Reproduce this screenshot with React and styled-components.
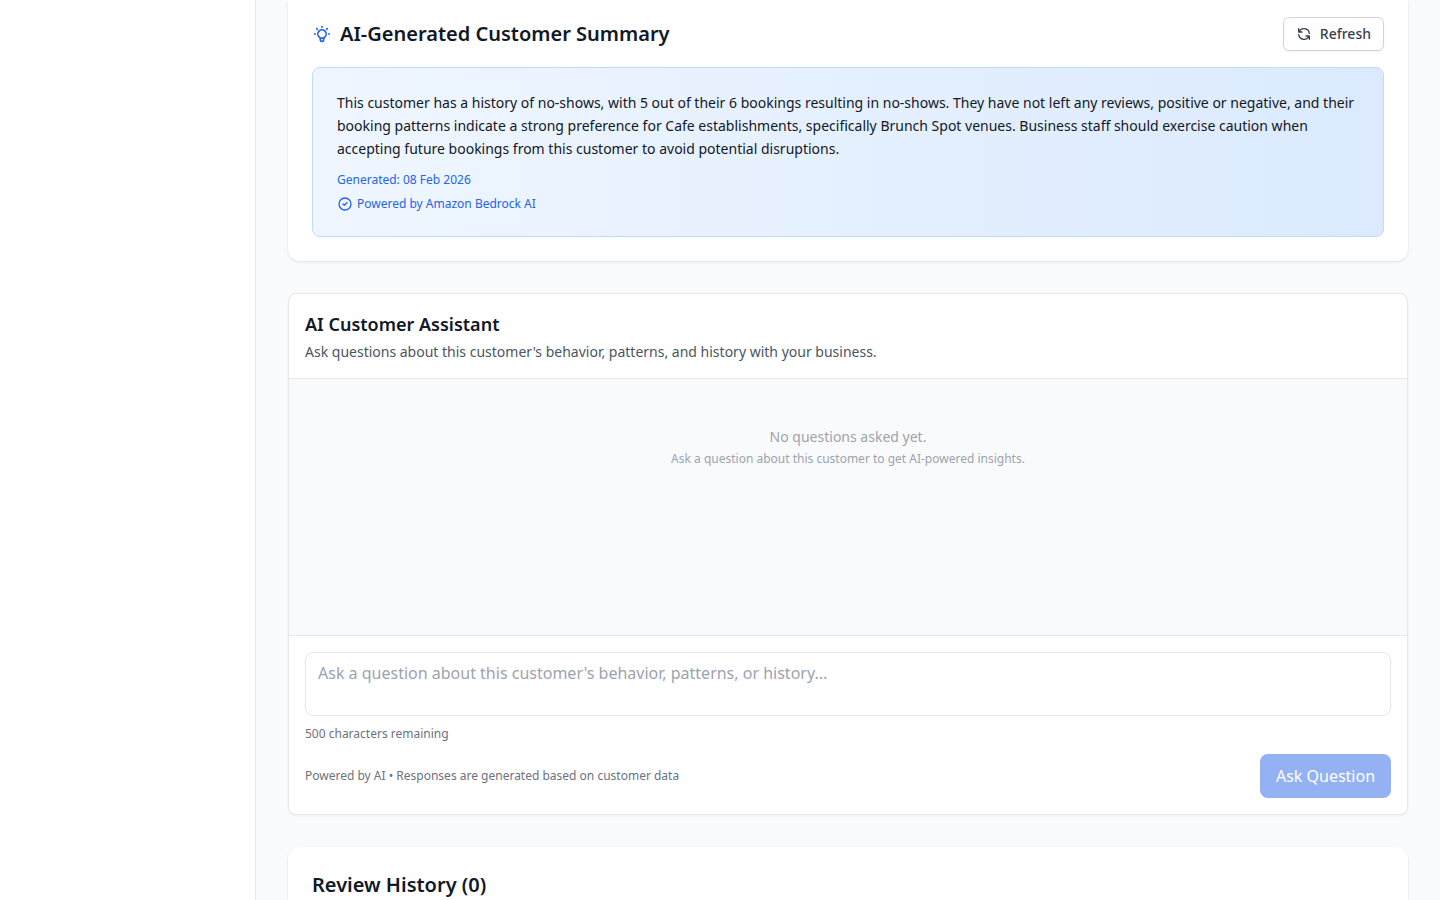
import React from 'react';
import styled, { createGlobalStyle } from 'styled-components';

const Global = createGlobalStyle`
  html, body { margin: 0; padding: 0; height: 100%; overflow: hidden; }
  body { font-family: "Noto Sans", sans-serif; background: #f9fafb; color: #111827; }
  * { box-sizing: border-box; }
`;

const Layout = styled.div`
  display: flex;
  height: 900px;
  overflow: hidden;
`;

const Sidebar = styled.aside`
  width: 256px;
  flex: none;
  background: #fff;
  border-right: 1px solid #e5e7eb;
`;

const Main = styled.main`
  flex: 1;
  padding: 0 32px;
  display: flex;
  flex-direction: column;
  gap: 32px;
  overflow: hidden;
`;

const Card = styled.section`
  flex: none;
  background: #fff;
  border-radius: ${({ $cut }) => ($cut ? '0 0 12px 12px' : '12px')};
  box-shadow: 0 1px 3px rgba(0, 0, 0, 0.1);
  padding: ${({ $cut }) => ($cut ? '17px 24px 24px' : '24px')};
`;

const SummaryHead = styled.div`
  display: flex;
  align-items: center;
  justify-content: space-between;
  margin-bottom: 16px;
`;

const Title = styled.h2`
  margin: 0;
  font-size: 20px;
  line-height: 28px;
  font-weight: 600;
  color: #111827;
  display: flex;
  align-items: center;
  gap: 8px;
`;

const RefreshButton = styled.button`
  display: flex;
  align-items: center;
  gap: 8px;
  height: 34px;
  padding: 0 12px 1px;
  background: #fff;
  border: 1px solid #d1d5db;
  border-radius: 6px;
  font: 500 14px "Noto Sans", sans-serif;
  color: #374151;
  box-shadow: 0 1px 2px rgba(0, 0, 0, 0.05);
`;

const SummaryBox = styled.div`
  background: linear-gradient(to right, #eff6ff, #dbeafe);
  border: 1px solid #bfdbfe;
  border-radius: 8px;
  padding: 24px;
`;

const SummaryText = styled.p`
  margin: 0 0 12px;
  font-size: 14px;
  line-height: 1.625;
  color: #111827;
`;

const Meta = styled.div`
  display: flex;
  align-items: center;
  gap: 4px;
  font-size: 12px;
  line-height: 16px;
  color: #2563eb;
  margin-top: ${({ $gap }) => $gap || 0}px;
`;

const AssistantCard = styled.section`
  flex: none;
  background: #fff;
  border: 1px solid #e5e7eb;
  border-radius: 8px;
  box-shadow: 0 1px 2px rgba(0, 0, 0, 0.05);
  overflow: hidden;
`;

const AssistantHead = styled.header`
  padding: 16px;
  height: 85px;
  border-bottom: 1px solid #e5e7eb;
`;

const AssistantTitle = styled.h3`
  margin: 0;
  font-size: 18px;
  line-height: 28px;
  font-weight: 600;
  color: #111827;
`;

const AssistantSub = styled.p`
  margin: 4px 0 0;
  font-size: 14px;
  line-height: 20px;
  color: #4b5563;
`;

const Messages = styled.div`
  height: 257px;
  padding: 48px 16px 0;
  background: #f9fafb;
  border-bottom: 1px solid #e5e7eb;
  text-align: center;
  color: #9ca3af;
`;

const EmptyTitle = styled.p`
  margin: 0;
  font-size: 14px;
  line-height: 20px;
`;

const EmptySub = styled.p`
  margin: 4px 0 0;
  font-size: 12px;
  line-height: 16px;
`;

const Composer = styled.div`
  padding: 16px;
`;

const Question = styled.textarea`
  display: block;
  width: 100%;
  height: 64px;
  padding: 8px 12px;
  border: 1px solid #e5e7eb;
  border-radius: 8px;
  outline: none;
  resize: none;
  font: 16px/24px "Noto Sans", sans-serif;
  &::placeholder { color: #9ca3af; opacity: 1; }
`;

const Remaining = styled.div`
  margin-top: 8px;
  font-size: 12px;
  line-height: 20px;
  color: #6b7280;
`;

const ComposerFoot = styled.div`
  display: flex;
  align-items: center;
  justify-content: space-between;
  margin-top: 10px;
`;

const Note = styled.span`
  font-size: 12px;
  line-height: 16px;
  color: #6b7280;
`;

const AskButton = styled.button`
  height: 44px;
  width: 131px;
  padding: 0;
  border: 0;
  border-radius: 8px;
  background: #93b1f3;
  color: #fff;
  font: 400 16px "Noto Sans", sans-serif;
`;

const BulbIcon = () => (
  <svg width="20" height="20" viewBox="0 0 24 24" fill="none" stroke="#2563eb" strokeWidth="2" strokeLinecap="round" strokeLinejoin="round">
    <path d="M9.663 17h4.673M12 3v1m6.364 1.636l-.707.707M21 12h-1M4 12H3m3.343-5.657l-.707-.707m2.828 9.9a5 5 0 117.072 0l-.548.547A3.374 3.374 0 0014 18.469V19a2 2 0 11-4 0v-.531c0-.895-.356-1.754-.988-2.386l-.548-.547z" />
  </svg>
);

const RefreshIcon = () => (
  <svg width="16" height="16" viewBox="0 0 24 24" fill="none" stroke="#374151" strokeWidth="2" strokeLinecap="round" strokeLinejoin="round">
    <path d="M4 4v5h.582m15.356 2A8.001 8.001 0 004.582 9m0 0H9m11 11v-5h-.581m0 0a8.003 8.003 0 01-15.357-2m15.357 2H15" />
  </svg>
);

const CheckIcon = () => (
  <svg width="16" height="16" viewBox="0 0 24 24" fill="none" stroke="#2563eb" strokeWidth="2" strokeLinecap="round" strokeLinejoin="round">
    <path d="M9 12l2 2 4-4m6 2a9 9 0 11-18 0 9 9 0 0118 0z" />
  </svg>
);

export default function App() {
  return (
    <Layout>
      <Global />
      <Sidebar />
      <Main>
        <Card $cut>
          <SummaryHead>
            <Title><BulbIcon />AI-Generated Customer Summary</Title>
            <RefreshButton><RefreshIcon />Refresh</RefreshButton>
          </SummaryHead>
          <SummaryBox>
            <SummaryText>
              This customer has a history of no-shows, with 5 out of their 6 bookings resulting in no-shows. They have not left any reviews, positive or negative, and their booking patterns indicate a strong preference for Cafe establishments, specifically Brunch Spot venues. Business staff should exercise caution when accepting future bookings from this customer to avoid potential disruptions.
            </SummaryText>
            <Meta>Generated: 08 Feb 2026</Meta>
            <Meta $gap={8}><CheckIcon />Powered by Amazon Bedrock AI</Meta>
          </SummaryBox>
        </Card>

        <AssistantCard>
          <AssistantHead>
            <AssistantTitle>AI Customer Assistant</AssistantTitle>
            <AssistantSub>Ask questions about this customer's behavior, patterns, and history with your business.</AssistantSub>
          </AssistantHead>
          <Messages>
            <EmptyTitle>No questions asked yet.</EmptyTitle>
            <EmptySub>Ask a question about this customer to get AI-powered insights.</EmptySub>
          </Messages>
          <Composer>
            <Question placeholder="Ask a question about this customer's behavior, patterns, or history..." />
            <Remaining>500 characters remaining</Remaining>
            <ComposerFoot>
              <Note>Powered by AI • Responses are generated based on customer data</Note>
              <AskButton>Ask Question</AskButton>
            </ComposerFoot>
          </Composer>
        </AssistantCard>

        <Card>
          <Title>Review History (0)</Title>
        </Card>
      </Main>
    </Layout>
  );
}
